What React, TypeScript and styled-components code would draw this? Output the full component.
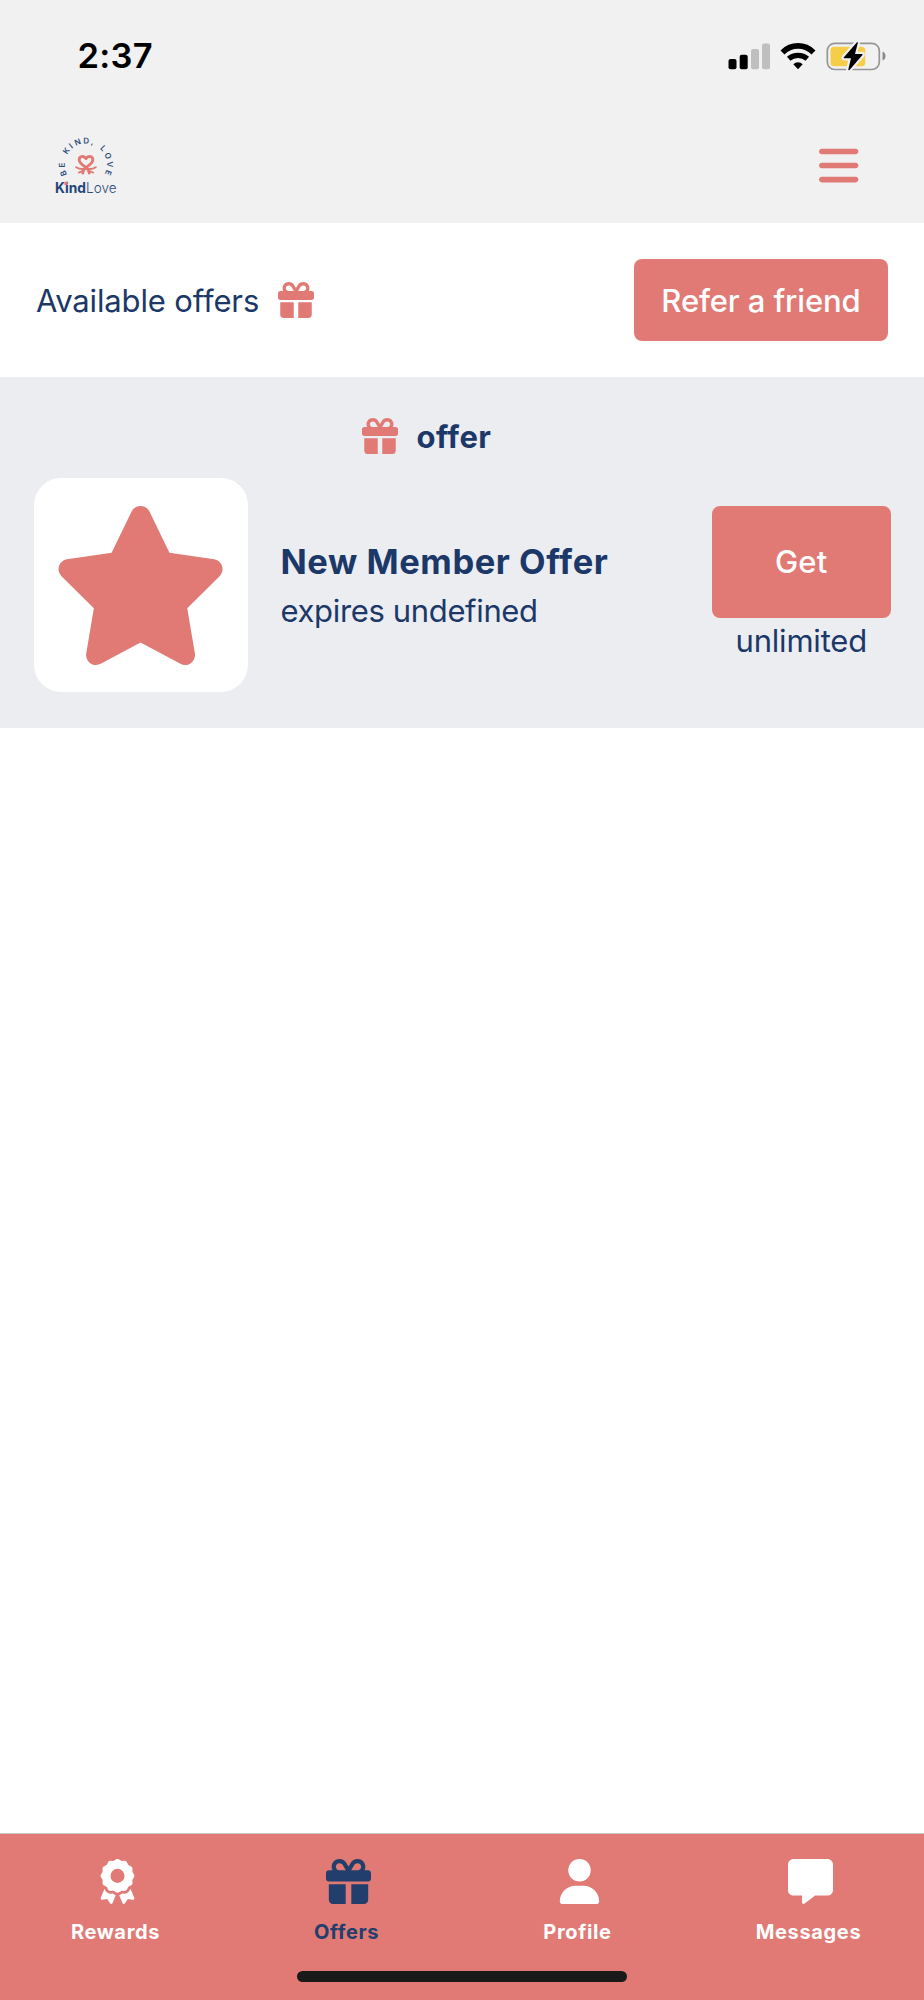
import React from "react";
import styled, { createGlobalStyle } from "styled-components";
import { FaAward, FaBars, FaGift, FaMessage, FaStar, FaUser } from "react-icons/fa6";

const coral = "#e17a75";
const navy = "#1b3868";

const GlobalStyle = createGlobalStyle`
  * { box-sizing: border-box; }
  body { margin: 0; background: #fff; }
  svg { display: block; flex: none; overflow: visible; }
`;

const Screen = styled.div`
  display: flex;
  flex-direction: column;
  width: 924px;
  height: 2000px;
  background: #fff;
  color: ${navy};
  font-family: Inter, "Liberation Sans", sans-serif;
  font-size: 31px;
  font-variant-ligatures: none;
  font-feature-settings: "calt" 0;
`;

const Header = styled.header`
  height: 223px;
  background: #f1f1f1;
`;

const StatusBar = styled.div`
  display: flex;
  align-items: center;
  justify-content: space-between;
  height: 111px;
  padding: 0 38px 0 77.5px;
  color: #000;
`;

const StatusIcons = styled.div`
  display: flex;
  align-items: center;
  gap: 10px;
`;

const AppBar = styled.div`
  display: flex;
  align-items: center;
  justify-content: space-between;
  height: 108px;
  padding: 0 65.2px 0 50px;
`;

const IconButton = styled.button`
  display: flex;
  padding: 0;
  border: 0;
  background: none;
  color: ${coral};
  font-size: 45px;
  svg { width: 39.4px; }
`;

const Label = styled.span<{
  $size?: number;
  $weight?: number;
  $spacing?: number;
  $line?: number;
  $drop?: number;
}>`
  padding-top: ${(p) => p.$drop ?? 0}px;
  font-size: ${(p) => p.$size ?? 31}px;
  font-weight: ${(p) => p.$weight ?? 380};
  letter-spacing: ${(p) => p.$spacing ?? -0.2}px;
  line-height: ${(p) => p.$line ?? 46}px;
  white-space: nowrap;
`;

const OffersBar = styled.section`
  display: flex;
  align-items: center;
  justify-content: space-between;
  height: 154px;
  padding: 0 36px;
`;

const IconLabel = styled.div`
  display: flex;
  align-items: center;
  gap: 19px;
`;

const GiftIcon = styled(FaGift)`
  width: 36px;
  height: 36px;
  color: ${coral};
`;

const Button = styled.button<{ $width: number; $height: number }>`
  display: flex;
  align-items: center;
  justify-content: center;
  width: ${(p) => p.$width}px;
  height: ${(p) => p.$height}px;
  padding: 0;
  border: 0;
  border-radius: 8px;
  background: ${coral};
  color: #fff;
  font-family: inherit;
`;

const OfferSection = styled.section`
  height: 351px;
  padding: 36px 33.5px 0;
  background: #ebedf1;
`;

const OfferHeading = styled(IconLabel)`
  height: 46px;
  margin-bottom: 19px;
  padding-left: 328px;
`;

const OfferRow = styled.div`
  display: flex;
  align-items: center;
  height: 214px;
`;

const Thumbnail = styled.div`
  display: flex;
  align-items: center;
  justify-content: center;
  width: 214.5px;
  height: 214px;
  border-radius: 27px;
  background: #fff;
  color: ${coral};
  svg { width: 179px; height: 159px; }
`;

const OfferText = styled.div`
  display: flex;
  flex: 1;
  flex-direction: column;
  padding-left: 32.5px;
`;

const OfferAction = styled.div`
  display: flex;
  flex-direction: column;
  align-items: center;
`;

const Content = styled.main`
  flex: 1;
`;

const Footer = styled.footer`
  height: 167px;
  border-top: 1px solid #cfc8cb;
  background: ${coral};
`;

const Tabs = styled.nav`
  display: grid;
  grid-template-columns: repeat(4, 1fr);
  height: 137px;
  padding-top: 25px;
`;

const Tab = styled.a<{ $active?: boolean }>`
  display: flex;
  flex-direction: column;
  align-items: center;
  gap: 13px;
  color: ${(p) => (p.$active ? "#213e6c" : "#fff")};
  svg { height: 45px; width: auto; margin-left: 4px; }
`;

const HomeIndicator = styled.div`
  width: 330px;
  height: 11px;
  margin: 0 auto;
  border-radius: 6px;
  background: #1a1a1a;
`;

const Signal = () => (
  <svg width="42" height="28" viewBox="728 41 42 28">
    <rect x="728.5" y="58" width="8" height="10.3" rx="2" />
    <rect x="739.7" y="53.8" width="8" height="14.5" rx="2" />
    <rect x="751" y="48" width="8" height="20.3" rx="2" fill="#bfbfbf" />
    <rect x="762" y="42.5" width="8" height="25.8" rx="2" fill="#bfbfbf" />
  </svg>
);

const Wifi = () => (
  <svg width="36" height="28" viewBox="780.5 41 36 28" fill="none" stroke="#000">
    <path d="M783 51.4Q789.5 44.9 798.5 44.9T814 51.4" strokeWidth="5.6" />
    <path d="M789.2 57.8Q793 54.4 798.5 54.4T807.8 57.8" strokeWidth="5.2" />
    <path d="M793.8 63.3Q795.8 61.2 798.5 61.2T803.2 63.3L799 67.8Q798.5 68.3 798 67.8Z" fill="#000" stroke="none" />
  </svg>
);

const Battery = () => (
  <svg width="60" height="32" viewBox="826.5 39 60 32">
    <rect x="827.8" y="42.3" width="52" height="26.2" rx="7.5" fill="none" stroke="#969696" strokeWidth="1.7" />
    <path d="M883 50.5Q886 51.5 886 55T883 59.5Z" fill="#8a8a8a" />
    <rect x="831" y="45.7" width="34.7" height="19.5" rx="3.5" fill="#f5cd47" />
    <path
      d="M857.5 41.2L844.2 56.4Q843.8 57.2 844.8 57.2H851.5L848.8 68.5Q848.9 69.8 850 68.9L863 54Q863.5 53 862.4 53H855.5L858.3 42Q858.4 40.8 857.5 41.2Z"
      stroke="#f1f1f1" strokeWidth="4.4" paintOrder="stroke" strokeLinejoin="round"
    />
  </svg>
);

/* Clock angle (degrees from the top) and half width of each motto glyph. */
const motto: [string, number, number][] = [
  ["B", -111, 2.7], ["E", -91, 2.5], [" ", -72, 1], ["K", -55, 2.7], ["I", -38, 1.1],
  ["N", -20, 3], ["D", 1, 2.9], [",", 17, 1.2], [" ", 30, 1], ["L", 47, 2.3],
  ["O", 68, 3], ["V", 89, 2.8], ["E", 110, 2.5],
];
const glyphs = motto.map(([, angle, half]) => {
  const a = (angle * Math.PI) / 180;
  return {
    x: 85.8 + 21.2 * Math.sin(a) - half * Math.cos(a),
    y: 164.7 - 21.2 * Math.cos(a) - half * Math.sin(a),
    angle,
  };
});

const Logo = () => (
  <svg width="72" height="72" viewBox="50 129 72 72" fontFamily="Inter, sans-serif" fill="#2e4c7b">
    <text
      fontSize="8" fontWeight="600"
      x={glyphs.map((g) => g.x.toFixed(2)).join(" ")}
      y={glyphs.map((g) => g.y.toFixed(2)).join(" ")}
      rotate={glyphs.map((g) => g.angle).join(" ")}
    >
      {motto.map(([c]) => c).join("")}
    </text>
    <g fill="none" stroke={coral} strokeLinecap="round">
      <path d="M86 158.4C83.5 155.6 79 156 79.2 160C79.4 163.6 83.5 165.4 86.5 168S88.8 171.6 89.2 173" strokeWidth="2.9" />
      <path d="M86 158.4C88.5 155.6 93 156 92.8 160C92.6 163.6 88.5 165.4 85.5 168S83.2 171.6 82.8 173" strokeWidth="2.9" />
      <path d="M84 169Q79.5 169.6 76.2 167.2M88 169Q92.5 169.6 95.8 167.2" strokeWidth="2" />
      <path d="M84.5 169.5Q82 172 78.8 172.6M87.5 169.5Q90 172 93.2 172.6" strokeWidth="1.9" />
    </g>
    <text x="55" y="193.2" fontSize="14.5" fontWeight="700" fill="#24457a" textLength="31" lengthAdjust="spacingAndGlyphs">Kind</text>
    <text x="86" y="193.2" fontSize="14.5" fontWeight="350" textLength="30.5" lengthAdjust="spacingAndGlyphs">Love</text>
    <rect x="64.4" y="181.8" width="3.4" height="3.2" fill={coral} />
  </svg>
);

const tabs = [
  { name: "Rewards", icon: FaAward },
  { name: "Offers", icon: FaGift, active: true },
  { name: "Profile", icon: FaUser },
  { name: "Messages", icon: FaMessage },
];

export default function App() {
  return (
    <Screen>
      <GlobalStyle />
      <Header>
        <StatusBar>
          <Label $size={34.5} $weight={600} $spacing={0.3}>2:37</Label>
          <StatusIcons>
            <Signal />
            <Wifi />
            <Battery />
          </StatusIcons>
        </StatusBar>
        <AppBar>
          <Logo />
          <IconButton aria-label="Menu"><FaBars /></IconButton>
        </AppBar>
      </Header>
      <OffersBar>
        <IconLabel>
          <Label $drop={2} $spacing={-0.13}>Available offers</Label>
          <GiftIcon />
        </IconLabel>
        <Button $width={254} $height={82}>
          <Label $weight={480} $drop={2} $spacing={-0.13}>Refer a friend</Label>
        </Button>
      </OffersBar>
      <OfferSection>
        <OfferHeading>
          <GiftIcon />
          <Label $weight={660} $spacing={0.4} $drop={1}>offer</Label>
        </OfferHeading>
        <OfferRow>
          <Thumbnail><FaStar /></Thumbnail>
          <OfferText>
            <Label $size={34.5} $weight={680} $spacing={0.55} $line={50} $drop={1}>New Member Offer</Label>
            <Label $line={47} $spacing={-0.35}>expires undefined</Label>
          </OfferText>
          <OfferAction>
            <Button $width={178.5} $height={111.5}>
              <Label $weight={480} $spacing={0.2}>Get</Label>
            </Button>
            <Label>unlimited</Label>
          </OfferAction>
        </OfferRow>
      </OfferSection>
      <Content />
      <Footer>
        <Tabs>
          {tabs.map(({ name, icon: Icon, active }) => (
            <Tab key={name} $active={active}>
              <Icon />
              <Label $size={20} $weight={660} $spacing={0.65} $line={30}>{name}</Label>
            </Tab>
          ))}
        </Tabs>
        <HomeIndicator />
      </Footer>
    </Screen>
  );
}
